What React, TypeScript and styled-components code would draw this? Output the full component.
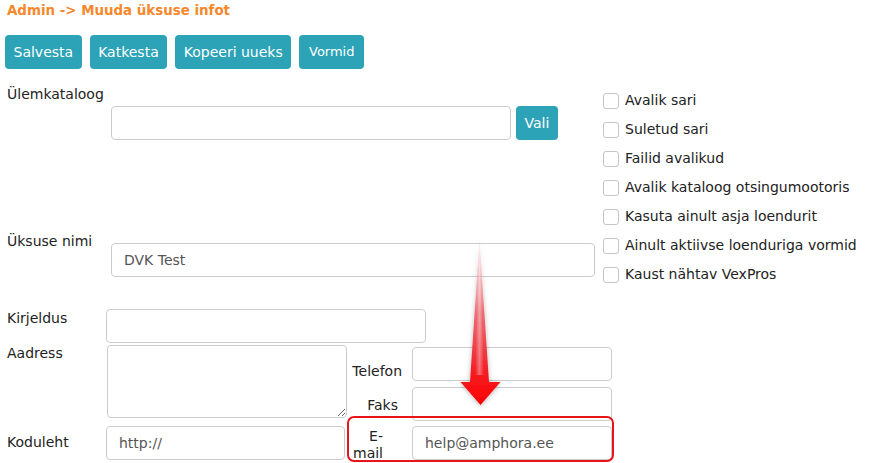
import React from "react";
import styled, { createGlobalStyle } from "styled-components";

const Global = createGlobalStyle`
  html, body { margin: 0; padding: 0; background: #fff; }
  body { font-family: "DejaVu Sans", Verdana, sans-serif; font-size: 14px; color: #222; }
  * { box-sizing: border-box; }
`;

const Page = styled.div`
  position: relative;
  width: 878px;
  height: 463px;
  overflow: hidden;
  padding: 3px 0 0 5px;
`;

const Title = styled.div`
  font-weight: bold;
  font-size: 13.4px;
  line-height: 16px;
  color: #f5882c;
  padding-left: 2px;
`;

const Toolbar = styled.div`
  display: flex;
  gap: 8px;
  margin-top: 16px;
`;

const Button = styled.button<{ $small?: boolean; $w?: number }>`
  height: 34px;
  padding: 0 8.5px;
  ${(p) => (p.$w ? `width: ${p.$w}px;` : "")}
  border: none;
  border-radius: 4px;
  background: #2ca3b6;
  color: #fff;
  font-family: "DejaVu Sans", Verdana, sans-serif;
  font-size: ${(p) => (p.$small ? "13px" : "14px")};
  line-height: 34px;
  cursor: pointer;
`;

const Main = styled.div`
  display: flex;
`;

const LeftCol = styled.div`
  width: 598px;
  flex: none;
`;

const TopRow = styled.div<{ $mt: number }>`
  display: grid;
  grid-template-columns: 106px 1fr;
  align-items: start;
  margin-top: ${(p) => p.$mt}px;
`;

const Label = styled.div<{ $mt?: number; $align?: string; $pr?: number }>`
  line-height: 17px;
  padding-left: 2px;
  margin-top: ${(p) => p.$mt ?? 0}px;
  text-align: ${(p) => p.$align ?? "left"};
  padding-right: ${(p) => p.$pr ?? 0}px;
  color: #222;
`;

const FieldLine = styled.div<{ $mt?: number }>`
  display: flex;
  align-items: center;
  gap: 5px;
  margin-top: ${(p) => p.$mt ?? 0}px;
`;

const Input = styled.input<{ $w: number; $mt?: number; $ml?: number }>`
  display: block;
  width: ${(p) => p.$w}px;
  height: 34px;
  margin-top: ${(p) => p.$mt ?? 0}px;
  margin-left: ${(p) => p.$ml ?? 0}px;
  padding: 0 12px;
  border: 1px solid #ccc;
  border-radius: 4px;
  font-family: "DejaVu Sans", Verdana, sans-serif;
  font-size: 14px;
  color: #555;
  background: #fff;
  outline: none;
  &::placeholder { color: #555; }
`;

const TextArea = styled.textarea`
  display: block;
  width: 240px;
  height: 73px;
  margin: 1px 0 0 1px;
  border: 1px solid #ccc;
  border-radius: 4px;
  font-family: "DejaVu Sans", Verdana, sans-serif;
  font-size: 14px;
  grid-row: 2 / span 2;
  grid-column: 2;
`;

const LowerGrid = styled.div`
  display: grid;
  grid-template-columns: 101px 241px 65px 200px;
  grid-template-rows: 37px 38px 40px 40px;
  align-items: start;
  margin-top: 30px;
`;

const Cell = styled.div<{ $col: number; $row: number; $span?: number }>`
  grid-column: ${(p) => p.$col} / span ${(p) => p.$span ?? 1};
  grid-row: ${(p) => p.$row};
  display: flex;
  flex-direction: column;
`;

const CheckList = styled.div`
  display: flex;
  flex-direction: column;
  padding-top: 17px;
`;

const CheckRow = styled.label`
  display: flex;
  align-items: center;
  gap: 6px;
  height: 29px;
  line-height: 17px;
  color: #222;
  white-space: nowrap;
`;

const Box = styled.span`
  width: 16px;
  height: 16px;
  border: 1px solid #c4c4c4;
  border-radius: 3px;
  background: #fff;
  flex: none;
`;

const Highlight = styled.div`
  position: absolute;
  left: 347px;
  top: 416px;
  width: 267px;
  height: 46px;
  border: 2px solid #e8141c;
  border-radius: 7px;
  pointer-events: none;
`;

const ArrowSvg = styled.svg`
  position: absolute;
  left: 455px;
  top: 235px;
  overflow: visible;
  pointer-events: none;
`;

const checks = [
  "Avalik sari",
  "Suletud sari",
  "Failid avalikud",
  "Avalik kataloog otsingumootoris",
  "Kasuta ainult asja loendurit",
  "Ainult aktiivse loenduriga vormid",
  "Kaust nähtav VexPros",
];

export default function App() {
  return (
    <>
      <Global />
      <Page>
        <Title>Admin -&gt; Muuda üksuse infot</Title>
        <Toolbar>
          <Button>Salvesta</Button>
          <Button>Katkesta</Button>
          <Button>Kopeeri uueks</Button>
          <Button $small $w={65}>Vormid</Button>
        </Toolbar>
        <Main>
          <LeftCol>
            <TopRow $mt={17}>
              <Label>Ülemkataloog</Label>
            </TopRow>
            <TopRow $mt={3}>
              <span />
              <FieldLine>
                <Input $w={400} />
                <Button>Vali</Button>
              </FieldLine>
            </TopRow>
            <TopRow $mt={93}>
              <Label>Üksuse nimi</Label>
              <Input $w={484} $mt={10} defaultValue="DVK Test" />
            </TopRow>
            <LowerGrid>
              <Cell $col={1} $row={1}>
                <Label $mt={3}>Kirjeldus</Label>
              </Cell>
              <Cell $col={2} $row={1} $span={3}>
                <Input $w={320} $mt={2} />
              </Cell>
              <Cell $col={1} $row={2}>
                <Label $mt={1}>Aadress</Label>
              </Cell>
              <TextArea />
              <Cell $col={3} $row={2}>
                <Label $mt={19} $pr={10} $align="right">Telefon</Label>
              </Cell>
              <Cell $col={4} $row={2}>
                <Input $w={200} $mt={3} />
              </Cell>
              <Cell $col={3} $row={3}>
                <Label $mt={15} $pr={14} $align="right">Faks</Label>
              </Cell>
              <Cell $col={4} $row={3}>
                <Input $w={200} $mt={5} />
              </Cell>
              <Cell $col={1} $row={4}>
                <Label $mt={12}>Koduleht</Label>
              </Cell>
              <Cell $col={2} $row={4}>
                <Input $w={239} $mt={4} placeholder="http://" />
              </Cell>
              <Cell $col={3} $row={4}>
                <Label $mt={6} $align="right" $pr={29}>E-<br />mail</Label>
              </Cell>
              <Cell $col={4} $row={4}>
                <Input $w={200} $mt={4} defaultValue="help@amphora.ee" />
              </Cell>
            </LowerGrid>
          </LeftCol>
          <CheckList>
            {checks.map((c) => (
              <CheckRow key={c}>
                <Box />
                {c}
              </CheckRow>
            ))}
          </CheckList>
        </Main>
        <Highlight />
        <ArrowSvg width="52" height="180" viewBox="0 0 52 180">
          <defs>
            <linearGradient id="ag" x1="0" y1="0" x2="0" y2="1">
              <stop offset="0" stopColor="#ffd0d4" stopOpacity="0.2" />
              <stop offset="0.45" stopColor="#ec5a64" stopOpacity="0.85" />
              <stop offset="0.8" stopColor="#f31d24" />
              <stop offset="1" stopColor="#ff0000" />
            </linearGradient>
            <linearGradient id="hl" x1="0" y1="0" x2="1" y2="0">
              <stop offset="0" stopColor="#fff" stopOpacity="0" />
              <stop offset="0.5" stopColor="#fff" stopOpacity="0.35" />
              <stop offset="1" stopColor="#fff" stopOpacity="0" />
            </linearGradient>
            <filter id="sh" x="-50%" y="-10%" width="200%" height="130%">
              <feDropShadow dx="0" dy="1" stdDeviation="2.5" floodColor="#000" floodOpacity="0.3" />
            </filter>
          </defs>
          <path
            d="M24.5 3 L34 147 L45.5 147 L25.5 170 L5.5 147 L15 147 Z"
            fill="url(#ag)"
            filter="url(#sh)"
          />
          <path d="M24.5 20 L29 140 L20 140 Z" fill="url(#hl)" />
        </ArrowSvg>
      </Page>
    </>
  );
}
